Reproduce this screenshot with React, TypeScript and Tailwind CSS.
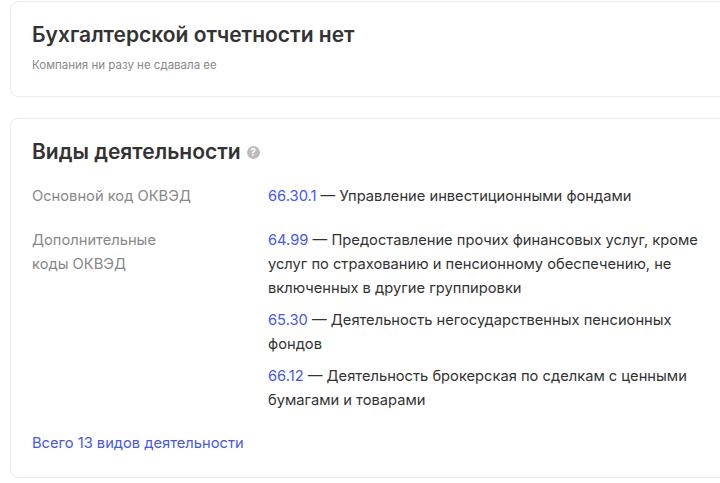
import React from 'react';

const extra = [
  { code: '64.99', text: 'Предоставление прочих финансовых услуг, кроме услуг по страхованию и пенсионному обеспечению, не включенных в другие группировки' },
  { code: '65.30', text: 'Деятельность негосударственных пенсионных фондов' },
  { code: '66.12', text: 'Деятельность брокерская по сделкам с ценными бумагами и товарами' },
];

export default function App() {
  return (
    <div className="bg-white w-[720px] h-[483px] overflow-hidden pl-[10px] pt-[1px] text-[#333]" style={{ fontFamily: 'Inter, "Noto Sans", sans-serif' }}>
      <div className="-mr-4 border border-[#ebebeb] rounded-lg h-[96px] pl-[21px] pt-[19px]">
        <h2 className="text-[21px] leading-[28px] font-semibold text-[#333]">Бухгалтерской отчетности нет</h2>
        <p className="text-[11.5px] text-[#888] mt-[8px]">Компания ни разу не сдавала ее</p>
      </div>
      <div className="-mr-4 mt-[21px] border border-[#ebebeb] rounded-lg h-[360px] pl-[21px] pt-[19px]">
        <h2 className="text-[21px] leading-[28px] font-semibold text-[#333] flex items-center gap-[6px]">
          Виды деятельности
          <span className="w-[13px] h-[13px] rounded-full bg-[#bbb] text-white text-[10px] leading-[13px] font-bold flex items-center justify-center">?</span>
        </h2>
        <div className="mt-[18px] grid grid-cols-[236px_1fr] text-[14.7px] leading-[24px]">
          <div className="text-[#888]">Основной код ОКВЭД</div>
          <div><span className="text-[#4457f5]">66.30.1</span> — Управление инвестиционными фондами</div>
          <div className="text-[#888] mt-[20px] w-[140px]">Дополнительные коды ОКВЭД</div>
          <div className="mt-[20px] w-[435px] flex flex-col gap-[8px]">
            {extra.map((e) => (
              <div key={e.code}><span className="text-[#4457f5]">{e.code}</span> — {e.text}</div>
            ))}
          </div>
        </div>
        <div className="mt-[20px] text-[14.7px] text-[#4457f5]">Всего 13 видов деятельности</div>
      </div>
    </div>
  );
}
